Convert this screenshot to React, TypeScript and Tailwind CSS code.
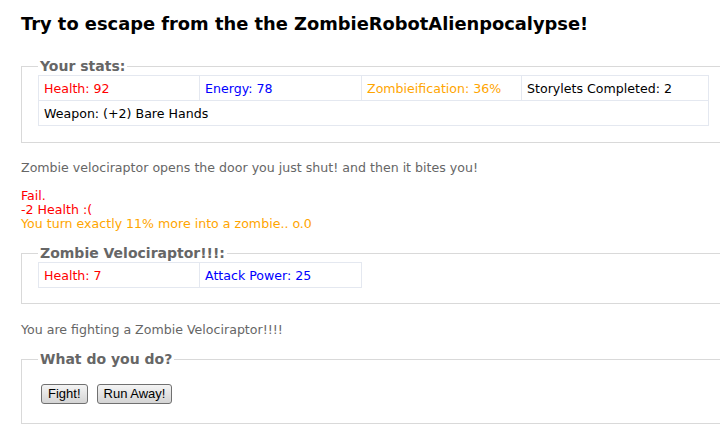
import React from "react";

const font = { fontFamily: '"DejaVu Sans", Verdana, sans-serif' };

function Cell({ children, className = "" }: { children: React.ReactNode; className?: string }) {
  return (
    <div className={`h-[25px] flex items-center pl-[5px] border-r border-b border-[#e4e8f0] text-[12.6px] leading-[15px] whitespace-nowrap ${className}`}>
      {children}
    </div>
  );
}

function Box({ title, children, className = "" }: { title: string; children: React.ReactNode; className?: string }) {
  return (
    <fieldset className={`w-[760px] border border-[#d9d9d9] pl-[16px] ${className}`}>
      <legend className="ml-0 px-[2px] text-[14px] leading-[17px] font-bold text-[#666666]">{title}</legend>
      {children}
    </fieldset>
  );
}

const btn =
  "h-[20px] px-[6px] rounded-[3px] border border-[#707070] bg-gradient-to-b from-[#f4f4f4] to-[#d4d4d4] text-[13px] leading-[16px] text-black";

export default function App() {
  return (
    <div className="w-[720px] h-[434px] overflow-hidden bg-white pl-[21px] text-black" style={font}>
      <h1 className="pt-[13px] text-[17.85px] leading-[22px] font-bold whitespace-nowrap">
        Try to escape from the the ZombieRobotAlienpocalypse!
      </h1>

      <Box title="Your stats:" className="mt-[23px] pb-[16px]">
        <div className="grid grid-cols-[161px_162px_160px_187px] w-[671px] border-l border-t border-[#e4e8f0]">
          <Cell className="text-[#ff0000]">Health: 92</Cell>
          <Cell className="text-[#0000ff]">Energy: 78</Cell>
          <Cell className="text-[#ffa500]">Zombieification: 36%</Cell>
          <Cell>Storylets Completed: 2</Cell>
          <Cell className="col-span-4">Weapon: (+2) Bare Hands</Cell>
        </div>
      </Box>

      <div className="mt-[18px] text-[12.6px] leading-[14px]">
        <p className="text-[#666666]">Zombie velociraptor opens the door you just shut! and then it bites you!</p>
        <p className="mt-[14px] text-[#ff0000]">Fail.</p>
        <p className="text-[#ff0000]">-2 Health :(</p>
        <p className="text-[#ffa500]">You turn exactly 11% more into a zombie.. o.0</p>
      </div>

      <Box title="Zombie Velociraptor!!!:" className="mt-[14px] pb-[15px]">
        <div className="grid grid-cols-[161px_162px] w-[324px] border-l border-t border-[#e4e8f0]">
          <Cell className="text-[#ff0000]">Health: 7</Cell>
          <Cell className="text-[#0000ff]">Attack Power: 25</Cell>
        </div>
      </Box>

      <p className="mt-[19px] text-[12.6px] leading-[14px] text-[#666666]">You are fighting a Zombie Velociraptor!!!!</p>

      <Box title="What do you do?" className="mt-[14px] pt-[16px] pb-[19px]">
        <div className="flex gap-[9px] pl-[3px]">
          <button className={btn} style={{ fontFamily: '"Liberation Sans", Arial, sans-serif' }}>
            Fight!
          </button>
          <button className={btn} style={{ fontFamily: '"Liberation Sans", Arial, sans-serif' }}>
            Run Away!
          </button>
        </div>
      </Box>
    </div>
  );
}
